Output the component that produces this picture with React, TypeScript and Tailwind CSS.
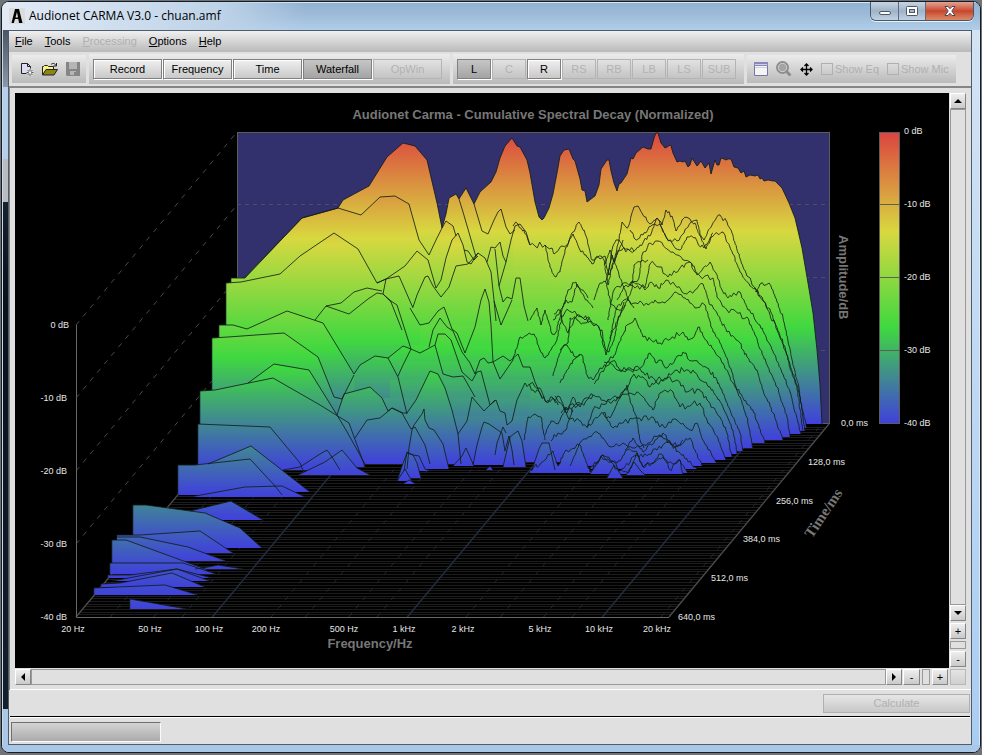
import React from "react";

type Pt = [number, number];
type Slice = { base: number; d: string; noisy?: boolean; fill?: boolean; edge?: boolean; plain?: boolean };

// Each decay slice: its floor line and the visible outline of its ridge.
const slices: Slice[] = [
  { base: 424, fill: true, noisy: false, d: "245,277 302,218 338,208 343,200 369,186 387,157 403,143 415,146 427,160 437,203 442,228 446,214 449,198 456,194 459,199 466,188 474,204 480,192 491,182 496,172 500,158 505,146 512,138 517,146 520,147 527,160 530,173 535,202 539,217 542,220 544,218 549,208 553,194 557,173 560,156 564,150 569,149 573,159 575,161 580,179 582,190 585,191 587,202 595,196 599,185 601,169 607,160 609,160 611,171 614,183 617,191 619,184 621,183 627,174 631,158 633,159 636,153 643,147 648,149 651,149 654,138 656,133 658,133 661,143 665,148 667,147 670,145 671,146 673,153 677,162 680,161 683,162 685,161 688,167 690,165 692,158 697,166 698,165 701,161 705,168 709,163 711,174 713,167 715,160 717,165 719,165 721,158 724,159 726,160 728,159 731,159 734,167 738,168 741,173 744,171 746,177 750,175 755,176 758,175 760,179 762,178 764,181 768,180 773,181 775,181 777,183 782,188 789,203 795,218 802,248 808,283 813,313 817,350 820,385 822,424" },
  { base: 431, fill: true, edge: true, d: "231,278 245,278 302,218 338,208 361,215 380,197 395,196 409,204 419,240 429,255 436,240 442,228 446,221 453,226 456,236" },
  { base: 430, fill: true, plain: true, d: "440,270 690,270" },
  { base: 434, fill: true, plain: true, d: "440,290 700,290" },
  { base: 438, fill: true, plain: true, d: "430,308 700,308" },
  { base: 442, fill: true, plain: true, d: "420,325 700,325" },
  { base: 446, fill: true, plain: true, d: "410,345 700,345" },
  { base: 450, fill: true, plain: true, d: "400,362 700,362" },
  { base: 454, fill: true, plain: true, d: "390,380 700,380" },
  { base: 458, fill: true, plain: true, d: "380,398 700,398" },
  { base: 462, fill: true, plain: true, d: "375,416 690,416" },
  { base: 428, fill: true, noisy: true, d: "513,226 518,224 524,230 530,245 535,246 545,245 552,248 554,254 562,246 567,245 573,232 579,222 586,236 592,260 596,257 600,259 605,256 608,274 612,250 616,240 619,240 622,222 626,227 629,225 634,207 638,206 643,215 650,224 657,218 662,225 666,210 672,216 676,231 682,220 690,219 695,223 700,236 704,240 712,225 720,215 727,222 732,233 738,253 746,273 755,288 764,302 770,309 777,330 785,350 797,385 803,412 807,428" },
  { base: 431, noisy: true, fill: true, d: "545,245 550,267 556,277 560,272 565,250 573,234 579,248 586,255 592,264 598,257 604,260 608,285 612,265 618,252 622,250 628,249 634,251 640,245 650,236 657,218 665,235 672,243 680,250 687,237 694,238 704,248 712,237 723,232 731,250 740,272 750,286 757,292 760,284 771,286 777,302 783,318 792,360 799,388 805,431" },
  { base: 434, noisy: true, d: "755,291 762,297 770,315 776,326 785,347 790,368 797,387 803,431" },
  { base: 437, fill: true, edge: true, d: "226,283 241,282 280,274 300,256 334,233 358,249 377,283 386,279 405,266 417,251 428,260 436,288 441,280 446,258 452,240 458,233 463,245 467,262 471,264 478,253 485,258 491,272 494,300 496,321" },
  { base: 437, fill: true, noisy: true, d: "630,285 645,288 650,264 660,267 668,277 680,268 690,262 700,276 713,278 717,297 727,310 747,317 755,335 768,367 777,387 787,417 790,437" },
  { base: 434, fill: true, noisy: true, d: "608,320 613,292 622,284 631,282 639,278 642,255 650,243 658,241 667,249 675,254 683,260 690,262 697,275 710,262 716,273 722,290 728,298 740,292 748,310 760,325 775,355 790,392 801,434" },
  { base: 440, fill: true, noisy: true, d: "617,300 624,287 632,282 645,290 651,282 658,288 666,280 675,285 682,292 695,290 703,284 710,305 717,313 727,332 740,343 747,357 757,370 763,390 773,413 783,440" },
  { base: 443, fill: true, noisy: true, d: "610,339 616,310 624,300 634,303 640,301 648,305 655,300 665,303 675,292 685,298 695,308 705,305 713,332 720,343 727,358 737,390 753,410 765,443" },
  { base: 446, fill: true, edge: true, d: "219,325 233,325 247,329 287,311 323,323 354,374 360,365 375,356 388,358 403,346 411,349 420,353 435,345 438,334 445,334 451,340 462,372 472,381" },
  { base: 448, fill: true, noisy: true, d: "604,362 613,358 627,325 635,318 643,337 660,343 683,332 688,340 693,338 698,327 707,341 715,352 723,363 733,383 740,397 747,417 753,448" },
  { base: 454, fill: true, edge: true, d: "212,338 228,337 284,333 318,357 334,397 342,399 354,375" },
  { base: 451, fill: true, noisy: true, d: "560,383 573,360 582,355 587,375 593,380 600,368 613,361 620,370 640,368 650,353 657,363 660,360 667,368 683,352 693,361 707,368 717,380 730,410 740,433 743,451" },
  { base: 454, fill: true, noisy: true, d: "594,384 608,362 617,370 626,370 640,369 643,372 657,383 677,370 693,370 700,380 710,387 723,407 733,430 737,454" },
  { base: 457, fill: true, noisy: true, d: "555,396 567,413 573,397 580,407 593,395 610,403 627,390 632,377 643,377 650,387 657,380 677,380 687,392 700,390 707,400 720,417 727,433 732,457" },
  { base: 460, fill: true, noisy: true, d: "530,384 540,388 546,402 553,398 560,397 567,415 587,427 593,410 610,400 620,397 630,393 643,397 653,410 660,393 673,392 680,407 700,403 707,420 720,443 726,460" },
  { base: 464, fill: true, d: "248,383 274,364 309,370 337,415 346,430 365,464" },
  { base: 464, fill: true, d: "337,415 344,394 370,387 382,398 388,411 392,408 403,413 407,413 416,400 430,371 438,374 445,388 452,410 458,434 461,464" },
  { base: 463, fill: true, noisy: true, d: "587,428 603,413 613,428 623,423 637,418 653,417 660,427 677,420 690,430 697,423 703,440 717,463" },
  { base: 467, fill: true, edge: true, d: "200,391 215,390 273,378 320,405 349,423 365,467" },
  { base: 466, fill: true, noisy: true, d: "570,466 580,443 597,432 610,447 623,443 640,447 660,435 675,447 690,438 695,450 702,466" },
  { base: 464, fill: true, d: "355,438 367,420 380,418 392,408 402,413 411,429 415,427 425,445 430,464" },
  { base: 470, fill: true, edge: true, d: "198,424 270,427 300,463 303,470" },
  { base: 469, fill: true, noisy: true, d: "590,469 603,455 617,463 627,450 643,457 657,450 670,443 680,453 697,469" },
  { base: 473, fill: true, noisy: true, d: "530,470 545,460 553,451 558,466 566,450 580,445 590,472 603,455 610,462 619,471 628,473 637,453 643,467 663,457 670,470 680,460 687,472" },
  { base: 474, fill: true, noisy: true, d: "590,474 601,456 613,461 620,471 637,455 643,467 652,463 661,454 668,463 680,460 683,474" },
  { base: 469, fill: true, d: "407,469 409,448 412,430 414,425 422,414 424,409 425,420 429,428 434,430 443,444 449,469" },
  { base: 465, fill: true, d: "473,465 477,445 482,427 484,422 489,424 502,433 505,451 509,436 512,450 514,465" },
  { base: 467, fill: true, d: "503,467 510,437 515,433 518,431 522,441 526,467" },
  { base: 470, fill: true, d: "532,470 539,449 542,443 549,443 555,470" },
  { base: 466, fill: true, d: "453,466 462,456 466,448 470,457 474,466" },
  { base: 470, fill: true, d: "283,470 300,467 320,454 327,450 332,457 340,470" },
  { base: 475, fill: true, d: "298,475 325,462 342,450 357,468 370,475" },
  { base: 471, fill: true, d: "404,471 407,452 413,455 419,456 425,469 431,471" },
  { base: 478, fill: true, d: "398,478 402,466 407,453 413,455 417,463 421,478" },
  { base: 481, fill: true, d: "397,481 405,469 410,478 412,481" },
  { base: 484, fill: true, d: "403,484 409,480 416,484" },
  { base: 478, fill: true, d: "607,478 614,465 619,472 623,478" },
  { base: 475, fill: true, d: "626,475 634,462 640,470 645,475" },
  { base: 470, fill: true, d: "486,470 490,466 493,470" },
  { base: 492, fill: true, d: "208,464 251,446 310,492" },
  { base: 495, fill: true, edge: true, d: "178,465 195,465 250,459 275,486 282,495" },
  { base: 497, fill: true, d: "190,497 245,487 282,486 305,497" },
  { base: 520, fill: true, d: "190,511 231,501 263,520" },
  { base: 517, d: "231,501 262,517" },
  { base: 548, fill: true, edge: true, d: "133,505 146,505 205,513 240,528 262,548" },
  { base: 553, fill: true, edge: true, d: "117,535 140,535 200,531 233,553" },
  { base: 561, fill: true, d: "117,537 140,537 188,547 226,561" },
  { base: 569, fill: true, d: "195,569 203,568 218,565 243,569" },
  { base: 570, fill: true, edge: true, d: "112,540 126,540 208,570" },
  { base: 574, fill: true, edge: true, d: "110,563 183,563 216,574" },
  { base: 578, fill: true, edge: true, d: "108,575 130,575 177,569 212,578" },
  { base: 581, fill: true, d: "112,581 177,569 210,581" },
  { base: 587, fill: true, edge: true, d: "101,584 120,583 172,573 205,587" },
  { base: 595, fill: true, edge: true, d: "94,588 165,585 198,595" },
  { base: 609, fill: true, edge: true, d: "130,599 187,609" },
];

// Ridge fragments seen between the main slices.
const fragments: { d: string; noisy?: boolean }[] = [
  { d: "459,199 463,212 470,236 476,257" },
  { d: "474,204 482,231 488,234 494,220 498,212 501,209 506,227 510,234 515,230" },
  { d: "315,320 326,306 349,314 368,299 377,293 383,294 391,301 397,305 411,349" },
  { d: "377,283 386,279 383,294 391,302 402,330" },
  { d: "326,306 341,303 354,292 367,288 382,291" },
  { d: "386,279 399,276 413,308" },
  { d: "413,307 417,295 425,277 428,276 433,286 441,297 449,287 456,266 468,264 478,253" },
  { d: "410,308 420,325 429,323 438,311 444,307 452,329 457,333 465,353 475,327 481,300 485,289 489,302 491,325 493,362" },
  { d: "429,347 433,330 440,318 447,327 453,331 462,352 470,363 475,374" },
  { d: "435,345 443,374 453,377 463,376 475,397" },
  { d: "472,381 477,372 481,371 490,405 496,400 500,411 505,413 507,425 512,421 517,400 525,383" },
  { d: "458,434 467,421 472,397 484,411 495,400" },
  { d: "398,376 403,365 411,349" },
  { d: "388,358 398,377 407,414" },
  { d: "464,250 468,251 474,260 478,256" },
  { d: "487,262 491,247 495,248 500,242 503,256 506,262" },
  { d: "495,249 499,286 506,262 511,240 515,226 520,224 526,232 530,245" },
  { d: "499,286 503,302 507,297 512,299 516,278 520,278 524,306 528,321" },
  { d: "494,301 501,325 512,300" },
  { d: "475,374 480,360 484,358 488,363 493,362 503,356 510,361 518,354 523,367 530,367 535,382 542,398" },
  { d: "493,362 500,379 513,360" },
  { d: "530,320 537,308 541,325 545,310 549,323 552,334 556,332 561,313 568,290 576,282 580,290 587,300 593,308", noisy: true },
  { d: "553,320 560,312 566,300 572,302 577,284 588,298", noisy: true },
  { d: "513,360 520,337 527,335 534,334 540,350 545,358 551,350 557,340 562,316 568,310 577,315 585,320 590,318", noisy: true },
  { d: "553,376 561,350 567,345 575,357 580,355", noisy: true },
  { d: "554,314 560,310 563,324 568,333 577,315 590,321 602,330 606,355 612,333 625,305", noisy: true },
  { d: "560,350 568,343 570,318 577,320 585,323 591,321 600,330 603,345 609,352 614,340 618,320 624,302", noisy: true },
  { d: "608,275 612,255 619,275 625,290 628,300 634,308", noisy: true },
  { d: "594,300 600,283 606,282 611,304 616,309 625,306 632,289 634,265 640,262 648,260", noisy: true },
  { d: "605,264 610,250 614,262 620,247 623,240", noisy: true },
  { d: "605,282 614,263 619,240 623,247 628,249 634,251", noisy: true },
  { d: "630,230 634,238 638,239 643,235 652,225 660,224 666,237 677,241 684,233 691,222 697,220 701,238 706,249 713,233", noisy: true },
  { d: "561,413 570,405 578,405 586,398 593,395", noisy: true },
  { d: "525,383 533,390 540,393 546,402 553,398 558,405", noisy: true },
  { d: "551,441 558,433 566,430 573,407 580,403", noisy: true },
  { d: "545,435 551,421 558,424 566,407 573,412", noisy: true },
  { d: "524,440 528,417 535,414 541,417 545,440", noisy: true },
  { d: "495,455 497,443 503,427 506,433", noisy: false },
  { d: "603,413 610,418 620,398 627,385 630,400 637,420 640,440 644,448", noisy: true },
  { d: "625,450 633,438 643,452 655,440 663,433 670,443 677,447 683,440", noisy: true },
];

const parse = (d: string): Pt[] => d.split(" ").map((p) => p.split(",").map(Number) as Pt);

const rough = (pts: Pt[], seed: number): Pt[] => {
  const out: Pt[] = [pts[0]];
  let s = seed * 7919 + 17;
  const rnd = () => {
    s = (s * 16807) % 2147483647;
    return s / 2147483647 - 0.5;
  };
  for (let i = 1; i < pts.length; i++) {
    const [ax, ay] = pts[i - 1];
    const [bx, by] = pts[i];
    const len = Math.hypot(bx - ax, by - ay);
    const n = Math.max(1, Math.round(len / 2.4));
    for (let k = 1; k < n; k++) {
      const f = k / n;
      const flat = Math.abs(bx - ax) / len;
      out.push([ax + (bx - ax) * f + rnd() * 0.9, ay + (by - ay) * f + rnd() * 6.5 * flat + rnd()]);
    }
    out.push([bx, by]);
  }
  return out;
};

const shapes = slices
  .map((s, i) => {
    const raw = parse(s.d);
    return { ...s, pts: s.noisy ? rough(raw, i + 1) : raw };
  })
  .sort((a, b) => a.base - b.base);
const bases = Array.from(new Set(slices.map((s) => s.base)));
const join = (pts: Pt[]) => pts.map((p) => p[0].toFixed(1) + "," + p[1].toFixed(1)).join(" ");

const freqX = (f: number) => 76 + Math.log10(f / 20) * 195;
const gridFreqs = [30, 50, 70, 100, 200, 300, 500, 700, 1000, 2000, 3000, 5000, 7000, 10000, 20000];
const freqLabels: [string, number][] = [
  ["20 Hz", 73], ["50 Hz", 150], ["100 Hz", 209], ["200 Hz", 266], ["500 Hz", 344],
  ["1 kHz", 404], ["2 kHz", 463], ["5 kHz", 540], ["10 kHz", 599], ["20 kHz", 657],
];
const timeLabels: [string, number, number][] = [
  ["0,0 ms", 841, 426], ["128,0 ms", 808, 465], ["256,0 ms", 776, 504],
  ["384,0 ms", 743, 542], ["512,0 ms", 711, 581], ["640,0 ms", 678, 620],
];

const Stops = () => (
  <>
    <stop offset="0" stopColor="#dc4440" />
    <stop offset="0.34" stopColor="#d8d840" />
    <stop offset="0.67" stopColor="#40d840" />
    <stop offset="1" stopColor="#4040dc" />
  </>
);

function Chart() {
  return (
    <svg
      viewBox="15 93 934 575"
      preserveAspectRatio="xMinYMin meet"
      className="block h-full w-full font-['Liberation_Sans',Arial,sans-serif] text-[9px]"
      role="img"
      aria-label="Cumulative Spectral Decay"
    >
      <defs>
        {bases.map((b) => (
          <linearGradient key={b} id={"g" + b} gradientUnits="userSpaceOnUse" x1="0" x2="0" y1={b - 292} y2={b}>
            <Stops />
          </linearGradient>
        ))}
        <linearGradient id="scale" x1="0" x2="0" y1="0" y2="1">
          <Stops />
        </linearGradient>
      </defs>
      <rect x="237.5" y="132.5" width="592" height="291" fill="#33316d" stroke="#5c5c5c" />
      {[204.5, 277.5, 350.5].map((y) => (
        <path key={y} d={`M237 ${y}H829`} stroke="#50505c" strokeDasharray="4 4" />
      ))}
      {[0, 1, 2, 3].map((k) => (
        <path key={k} d={`M76 ${325 + k * 73}L237 ${132 + k * 73}`} stroke="#4a4a4a" strokeDasharray="5 6" />
      ))}
      {Array.from({ length: 71 }, (_, i) => {
        const t = (i + 1) / 72;
        const y = Math.round(424 + 193 * t) + 0.5;
        return <path key={i} d={`M${237 - 161 * t} ${y}H${829 - 160 * t}`} stroke="#1d1d1d" />;
      })}
      {gridFreqs.map((f) => {
        const x = freqX(f);
        const major = f === 100 || f === 1000 || f === 10000;
        return (
          <path key={f} d={`M${x} 617L${x + 161} 424`} stroke={major ? "#222d3c" : "#1f2937"} strokeWidth={major ? 1.5 : 1} strokeDasharray={major ? undefined : "5 6"} />
        );
      })}
      <path d="M76 617L237 424M829 424L669 617" stroke="#4c4c4c" fill="none" strokeWidth="1.3" />
      <path d="M76.500 325V617.500H669" stroke="#666" fill="none" />
      {shapes.filter((s) => s.fill).map((s, i) => {
        const first = s.pts[0];
        const last = s.pts[s.pts.length - 1];
        return (
          <g key={i}>
            <polygon points={`${first[0]},${s.base} ${join(s.pts)} ${last[0]},${s.base}`} fill={`url(#g${s.base})`} />
            {s.edge && <path d={`M${first[0]} ${s.base}V${first[1]}`} stroke="#20303a" strokeOpacity="0.7" />}
          </g>
        );
      })}
      <g fill="none" stroke="#101c16" strokeOpacity="0.82" strokeLinejoin="round">
        {shapes.filter((s) => !s.plain).map((s, i) => <polyline key={i} points={join(s.pts)} />)}
        {fragments.map((s, i) => <polyline key={i} points={join(s.noisy ? rough(parse(s.d), i + 90) : parse(s.d))} />)}
      </g>
      <rect x="879.500" y="132.500" width="20" height="291" fill="url(#scale)" stroke="#5c5c5c" />
      {[204.5, 277.5, 350.5].map((y) => <path key={y} d={`M879 ${y}h21`} stroke="#5b6350" />)}
      <g fill="#e6e6e6">
        {[0, 1, 2, 3, 4].map((k) => (
          <React.Fragment key={k}>
            <text x="904" y={134 + k * 73}>{k ? `-${k * 10} dB` : "0 dB"}</text>
            <text x={k ? 67 : 69} y={328 + k * 73} textAnchor="end">{k ? `-${k * 10} dB` : "0 dB"}</text>
          </React.Fragment>
        ))}
        {freqLabels.map(([t, x]) => <text key={t} x={x} y="632" textAnchor="middle">{t}</text>)}
        {timeLabels.map(([t, x, y]) => <text key={t} x={x} y={y}>{t}</text>)}
      </g>
      <g fill="#777" className="text-[13px] font-bold">
        <text x="533" y="119" textAnchor="middle">Audionet Carma - Cumulative Spectral Decay (Normalized)</text>
        <text x="370" y="648" textAnchor="middle">Frequency/Hz</text>
        <text transform="translate(839 235) rotate(90)">Amplitude/dB</text>
        <text transform="translate(812 539) rotate(-56)" className="font-['Liberation_Serif',serif] text-[15px]">Time/ms</text>
      </g>
    </svg>
  );
}

const panel = "flex items-center bg-linear-to-b from-[#ececec] to-[#bababa]";

function ToolButton({ label, wide, active, disabled }: { label: string; wide?: boolean; active?: boolean; disabled?: boolean }) {
  const tone = disabled
    ? "border-[#b4b4b4] text-[#b2b2b2]"
    : active
      ? "border-[#808080] bg-linear-to-b from-[#c6c6c6] to-[#a4a4a4] shadow-[1px_1px_0_#fff]"
      : "border-[#808080] bg-linear-to-b from-[#f0f0f0] to-[#c9c9c9] shadow-[inset_1px_1px_0_#fff,1px_1px_0_#fff]";
  return (
    <button type="button" disabled={disabled} className={`h-5 shrink-0 border leading-none ${wide ? "w-[69px]" : "w-[34px]"} ${tone}`}>
      {label}
    </button>
  );
}

const bar = "flex h-4 shrink-0 items-center justify-center border border-[#858585] border-t-white border-l-white bg-linear-to-b from-[#eeeeee] to-[#cacaca] leading-none";
const track = "min-h-0 min-w-0 flex-1 border border-[#999] bg-[#e0e0e0]";

function Arrow({ d }: { d: string }) {
  return (
    <svg viewBox="0 0 8 8" className="h-2 w-2">
      <path d={d} fill="#000" />
    </svg>
  );
}

export default function App() {
  return (
    <div className="flex h-screen min-h-[600px] w-full flex-col bg-[#6f7478] px-px pt-px pb-0.5 font-['Liberation_Sans',Arial,sans-serif] text-[11px] text-black">
      <div className="flex min-h-0 flex-1 flex-col overflow-hidden rounded-lg border border-[#161c26] bg-[#a9c7e6] shadow-[inset_0_0_0_1px_#e4eef8]">
        <header className="flex h-7 shrink-0 items-start bg-linear-to-b from-[#8fb2d3] via-[#9fbcd9] to-[#b0cdea] shadow-[inset_0_1px_0_#d8e6f2]">
          <div className="flex h-full flex-1 items-center bg-linear-to-r from-[#e2ebf5] via-[#bed3e8] via-25% to-transparent to-35% pl-[7px]">
            <svg viewBox="0 0 16 16" className="h-4 w-4">
              <rect width="16" height="16" fill="#dcdcdc" />
              <path fillRule="evenodd" d="M6 1h4l3.500 14H10L9.300 11H6L4.800 15H2.500zM8 4L6.500 9.500H9z" fill="#000" />
            </svg>
            <h1 className="ml-1 font-['Open_Sans',sans-serif] text-[12px] text-black">Audionet CARMA V3.0 - chuan.amf</h1>
          </div>
          <div className="mr-1.5 flex h-[19px] overflow-hidden rounded-b-md border border-t-0 border-[#49566a] shadow-[0_1px_0_#e8f2fb]">
            <button type="button" aria-label="Minimize" className="flex w-7 items-center justify-center border-r border-[#5d6b7f] bg-linear-to-b from-[#c6d4e2] via-[#9fb3c8] to-[#c0d2e4]">
              <span className="mt-1 h-1 w-3 rounded-xs border border-[#4b5563] bg-white" />
            </button>
            <button type="button" aria-label="Maximize" className="flex w-[27px] items-center justify-center border-r border-[#5d6b7f] bg-linear-to-b from-[#c6d4e2] via-[#9fb3c8] to-[#c0d2e4]">
              <svg viewBox="0 0 12 10" className="h-2.5 w-3">
                <rect x=".5" y=".5" width="11" height="9" rx="1" fill="#fff" stroke="#4b5563" />
                <rect x="3.500" y="3.500" width="5" height="3" fill="#a8bacd" stroke="#4b5563" />
              </svg>
            </button>
            <button type="button" aria-label="Close" className="flex w-[47px] items-center justify-center bg-linear-to-b from-[#e2a392] via-[#c7452c] to-[#d98a68]">
              <svg viewBox="0 0 12 10" className="h-2.5 w-3">
                <path d="M1 .5h3l2 2.200L8 .5h3L7.800 5 11 9.500H8L6 7.300 4 9.500H1L4.200 5z" fill="#fff" stroke="#4f4550" />
              </svg>
            </button>
          </div>
        </header>
        <div className="flex min-h-0 flex-1 bg-linear-to-b from-[#8f9aa6] from-0% via-[#b5cee8] via-10% to-[#a9c7e6] pb-[7px]">
          <div className="flex w-1.5 shrink-0 flex-col border-l border-[#cdd9e6]">
            <div className="h-[8%] bg-linear-to-b from-[#4a5663] to-[#8a99a8]" />
            <div className="h-[10%] bg-[#b4cfeb]" />
            <div className="h-[6%] bg-[#b9bcc0]" />
            <div className="h-[71%] bg-linear-to-b from-[#16222c] via-[#09111b] via-20% to-[#141f2c]" />
          </div>
          <div className="flex min-w-0 flex-1 flex-col border border-[#4f5c6c] bg-[#e0e0e0]">
            <nav className="flex h-[21px] shrink-0 items-center gap-3 bg-linear-to-b from-[#f0f0f0] to-[#bababa] pl-1.5">
              <button type="button"><u>F</u>ile</button>
              <button type="button"><u>T</u>ools</button>
              <button type="button" disabled className="text-[#b0b0b0]"><u>P</u>rocessing</button>
              <button type="button"><u>O</u>ptions</button>
              <button type="button"><u>H</u>elp</button>
            </nav>
            <div className="flex h-[34px] shrink-0 items-center gap-[3px] pl-[3px]">
              <div className={`${panel} h-7 w-[74px] gap-2 pl-2`}>
                <button type="button" aria-label="New">
                  <svg viewBox="0 0 14 14" className="h-3.5 w-3.5">
                    <path d="M1.500 1.500h6l3 3v7h-9z" fill="#dcdcf4" stroke="#222" />
                    <path d="M7.500 1.500v3h3" fill="none" stroke="#222" />
                    <path d="M10 6.500v8M6 10.500h8M7.200 7.700l5.600 5.600M12.800 7.700l-5.600 5.600" stroke="#e4e4e4" strokeWidth="2" />
                    <path d="M10 7v7M6.500 10.500h7M7.500 8l5 5M12.500 8l-5 5" stroke="#333" strokeWidth=".8" />
                    <circle cx="10" cy="10.500" r="1.200" fill="#fff" />
                  </svg>
                </button>
                <button type="button" aria-label="Open">
                  <svg viewBox="0 0 16 14" className="h-3.5 w-4">
                    <path d="M.5 13V4.500h1l1-1h3l1 1h5V8" fill="#f8f47c" stroke="#222" />
                    <path d="M.5 13L4 7.500h11.500L12 13z" fill="#8a8612" stroke="#222" />
                    <path d="M9 2.500c2-2 4-1 5 1M14.500 1v3h-3" fill="none" stroke="#222" />
                  </svg>
                </button>
                <button type="button" aria-label="Save">
                  <svg viewBox="0 0 14 14" className="h-3.5 w-3.5">
                    <path d="M0 0h14v14H1L0 13z" fill="#858585" />
                    <path d="M3 0h8v7H3zM4 9h6v4H4z" fill="#b5b5b5" />
                    <path d="M8 10h2v3H8z" fill="#858585" />
                  </svg>
                </button>
              </div>
              <div className={`${panel} h-[30px] w-[361px] gap-px pl-1`}>
                <ToolButton wide label="Record" />
                <ToolButton wide label="Frequency" />
                <ToolButton wide label="Time" />
                <ToolButton wide active label="Waterfall" />
                <ToolButton wide disabled label="OpWin" />
              </div>
              <div className={`${panel} h-[30px] w-[291px] gap-px pl-1`}>
                <ToolButton active label="L" />
                <ToolButton disabled label="C" />
                <ToolButton label="R" />
                <ToolButton disabled label="RS" />
                <ToolButton disabled label="RB" />
                <ToolButton disabled label="LB" />
                <ToolButton disabled label="LS" />
                <ToolButton disabled label="SUB" />
              </div>
              <div className={`${panel} h-7 w-[209px] gap-2 pl-[7px] text-[#b0b0b0]`}>
                <button type="button" aria-label="Window">
                  <svg viewBox="0 0 14 14" className="h-3.5 w-3.5">
                    <path d="M.5.5h13v13H.5z" fill="#f4f4f4" stroke="#7775a8" />
                    <path d="M0 0h14v4H0z" fill="#8a88b8" />
                    <path d="M1 2.500h12M1 5.500h12" stroke="#d0d0e4" />
                  </svg>
                </button>
                <button type="button" aria-label="Zoom">
                  <svg viewBox="0 0 16 16" className="h-4 w-4">
                    <circle cx="6.500" cy="6.500" r="5.500" fill="#9c9c9c" stroke="#8c8c8c" strokeWidth="2" />
                    <circle cx="6.500" cy="6.500" r="4.200" fill="#a4a4a4" stroke="#d0d0d0" />
                    <path d="M10.500 10.500l4 4" stroke="#8c8c8c" strokeWidth="3" />
                  </svg>
                </button>
                <button type="button" aria-label="Move">
                  <svg viewBox="0 0 13 13" className="h-[13px] w-[13px]">
                    <path d="M6.500 1v11M1 6.500h11M4.500 3l2-2 2 2M4.500 10l2 2 2-2M3 4.500l-2 2 2 2M10 4.500l2 2-2 2" fill="none" stroke="#000" strokeWidth="1.300" />
                  </svg>
                </button>
                <label className="flex items-center gap-0.5 whitespace-nowrap">
                  <input type="checkbox" disabled className="h-3 w-3 appearance-none border border-[#b0b0b0]" />
                  Show Eq
                </label>
                <label className="flex items-center gap-0.5 whitespace-nowrap">
                  <input type="checkbox" disabled className="h-3 w-3 appearance-none border border-[#b0b0b0]" />
                  Show Mic
                </label>
              </div>
            </div>
            <main className="flex min-h-0 flex-1 flex-col border-t-2 border-l border-[#858585] p-[5px] shadow-[inset_0_-1px_0_#fff]">
              <div className="flex min-h-0 flex-1">
                <div className="min-w-0 flex-1 bg-black">
                  <Chart />
                </div>
                <div className="flex w-[17px] shrink-0 flex-col gap-px pl-px">
                  <div className="flex min-h-0 flex-1 flex-col">
                    <button type="button" aria-label="Scroll up" className={bar}><Arrow d="M0 6L4 2L8 6z" /></button>
                    <div className={track} />
                    <button type="button" aria-label="Scroll down" className={bar}><Arrow d="M0 2L4 6L8 2z" /></button>
                  </div>
                  <button type="button" className={`${bar} mt-px`}>+</button>
                  <div className="my-px h-2 border border-[#999] bg-[#e0e0e0]" />
                  <button type="button" className={`${bar} mb-px`}>-</button>
                </div>
              </div>
              <div className="flex h-[17px] shrink-0 gap-px pt-px">
                <div className="flex min-w-0 flex-1">
                  <button type="button" aria-label="Scroll left" className={`${bar} w-4`}><Arrow d="M6 0L2 4L6 8z" /></button>
                  <div className={track} />
                  <button type="button" aria-label="Scroll right" className={`${bar} w-4`}><Arrow d="M2 0L6 4L2 8z" /></button>
                </div>
                <button type="button" className={`${bar} w-[17px]`}>-</button>
                <div className="mx-px w-2 border border-[#999] bg-[#e0e0e0]" />
                <button type="button" className={`${bar} w-4`}>+</button>
                <div className="ml-px w-4 border border-[#b8b8b8] bg-linear-to-b from-[#e4e4e4] to-[#cfcfcf]" />
              </div>
            </main>
            <div className="mx-px flex h-[27px] shrink-0 items-center justify-end border-b border-black shadow-[0_1px_0_#fff]">
              <button type="button" disabled className="h-[19px] w-[147px] border border-[#b0b0b0] bg-linear-to-b from-[#e6e6e6] to-[#c8c8c8] leading-none text-[#b0b0b0]">
                Calculate
              </button>
            </div>
            <footer className="flex h-[27px] shrink-0 items-center pt-0.5 pl-0.5">
              <div role="progressbar" aria-label="Progress" className="h-5 w-[150px] border border-[#fafafa] border-t-[#707070] border-l-[#707070] bg-linear-to-b from-[#d4d4d4] to-[#ababab]" />
            </footer>
          </div>
          <div className="w-2 shrink-0 border-r border-[#d8e8f8] bg-linear-to-b from-[#d3e3f4] to-[#a9cdf2]" />
        </div>
      </div>
    </div>
  );
}
